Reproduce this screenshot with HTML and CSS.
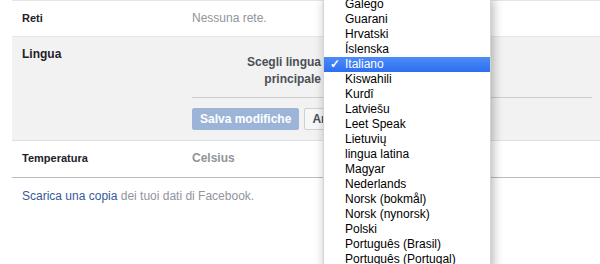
FILE: index.html
```html
<!DOCTYPE html>
<html lang="it">
<head>
  <meta charset="UTF-8">
  <title>Impostazioni generali</title>
  <link rel="stylesheet" href="styles.css">
</head>
<body>

  <div class="settings">
    <div class="row">
      <div class="label">Reti</div>
      <div class="value">Nessuna rete.</div>
    </div>

    <!-- Expanded language editor -->
    <div class="row row-open">
      <div class="label label-open">Lingua</div>
      <div class="editor">
        <div class="field">
          <div class="field-label">Scegli lingua principale</div>
          <div class="select">Italiano</div>
        </div>
        <div class="actions">
          <button class="btn btn-save" disabled>Salva modifiche</button>
          <button class="btn btn-cancel">Annulla</button>
        </div>
      </div>
    </div>

    <div class="row row-last">
      <div class="label">Temperatura</div>
      <div class="value value-bold">Celsius</div>
    </div>

    <p class="download"><a href="#">Scarica una copia</a> dei tuoi dati di Facebook.</p>
  </div>

  <!-- Open native select menu -->
  <ul class="menu">
    <li>Galego</li>
    <li>Guarani</li>
    <li>Hrvatski</li>
    <li>Íslenska</li>
    <li class="selected">Italiano</li>
    <li>Kiswahili</li>
    <li>Kurdî</li>
    <li>Latviešu</li>
    <li>Leet Speak</li>
    <li>Lietuvių</li>
    <li>lingua latina</li>
    <li>Magyar</li>
    <li>Nederlands</li>
    <li>Norsk (bokmål)</li>
    <li>Norsk (nynorsk)</li>
    <li>Polski</li>
    <li>Português (Brasil)</li>
    <li>Português (Portugal)</li>
  </ul>

</body>
</html>
```

FILE: styles.css
```css
body {
  margin: 0;
  font-family: "Liberation Sans", Arial, sans-serif;
  font-size: 12px;
  color: #1d2129;
  background: #fff;
}
.settings {
  margin-left: 12px;
  border-top: 1px solid #e5e5e5;
}
.row {
  display: flex;
  padding: 10px 10px 11px;
  border-bottom: 1px solid #e5e5e5;
  line-height: 14px;
}
.label {
  width: 170px;
  flex-shrink: 0;
  font-weight: bold;
  font-size: 11px;
}
.value {
  color: #90949c;
}
.value-bold {
  font-weight: bold;
  font-size: 12px;
}
.row-open {
  background: #f2f2f2;
  padding: 9px 8px 10px 10px;
  border-bottom-color: #dddfe2;
}
.label-open {
  font-size: 12px;
  line-height: 16px;
}
.editor {
  flex: 1;
  padding-top: 8px;
}
.field {
  display: flex;
  padding-bottom: 9px;
  border-bottom: 1px solid #ccc;
}
.field-label {
  width: 129px;
  text-align: right;
  font-weight: bold;
  color: #4b4f56;
  line-height: 17px;
}
.select {
  margin-left: 6px;
  color: #4b4f56;
}
.actions {
  display: flex;
  gap: 5px;
  margin-top: 10px;
}
.btn {
  height: 22px;
  padding: 0 7px;
  font-family: "Liberation Sans", Arial, sans-serif;
  font-size: 12px;
  font-weight: bold;
  border-radius: 2px;
  border: 1px solid #9cb4d8;
}
.btn-save {
  background: #9cb4d8;
  color: #fff;
}
.btn-cancel {
  background: #f6f7f9;
  border-color: #ced0d4;
  color: #4b4f56;
}
.row-last {
  border-bottom-color: #bbb;
  padding-bottom: 12px;
}
.download {
  margin: 11px 10px;
  color: #90949c;
}
.download a {
  color: #365899;
  text-decoration: none;
}
.menu {
  position: absolute;
  left: 323px;
  top: -4px;
  width: 166px;
  margin: 0;
  padding: 0;
  list-style: none;
  background: #fff;
  border: 1px solid #d4d4d4;
  box-shadow: 2px 3px 10px rgba(0, 0, 0, 0.3);
  color: #000;
  font-size: 12px;
}
.menu li {
  height: 15px;
  line-height: 15px;
  padding-left: 21px;
  position: relative;
}
.menu .selected {
  background: linear-gradient(#4c8cf8, #2d6ef0);
  color: #fff;
}
.menu .selected::before {
  content: "✓";
  position: absolute;
  left: 6px;
  font-weight: bold;
}
```
